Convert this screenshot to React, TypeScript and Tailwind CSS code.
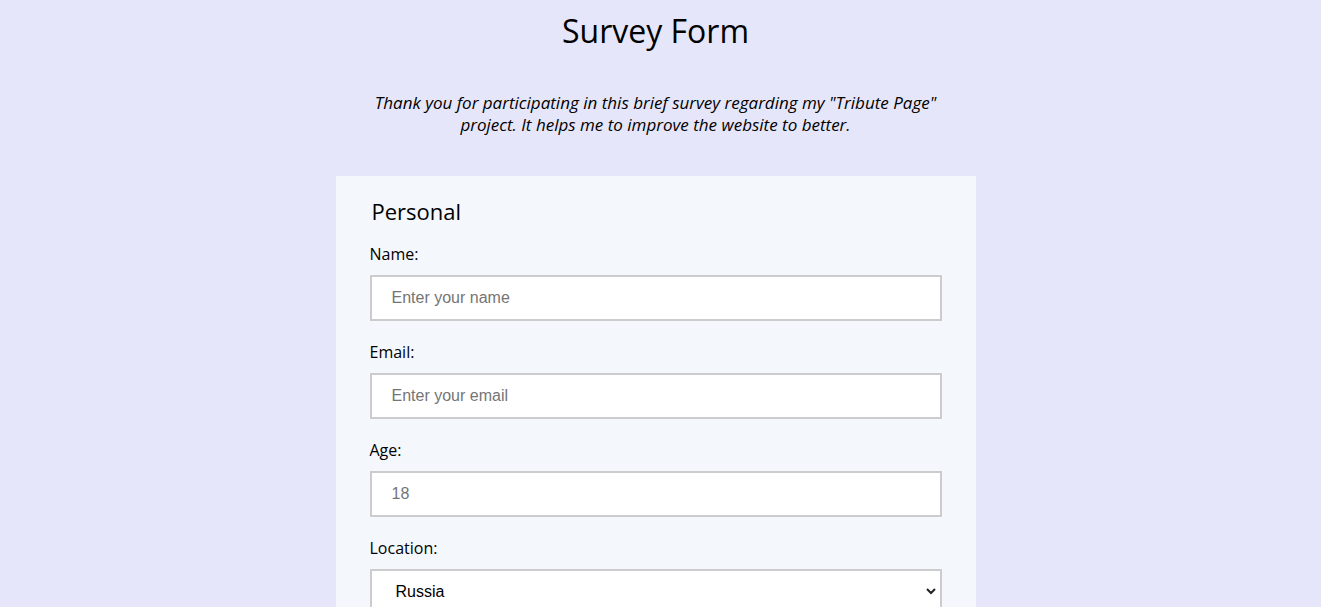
import React from "react";

const fields = [
  { id: "name", label: "Name:", type: "text", placeholder: "Enter your name" },
  { id: "email", label: "Email:", type: "email", placeholder: "Enter your email" },
  { id: "age", label: "Age:", type: "number", placeholder: "18" },
];

export default function App() {
  return (
    <div className="min-h-screen bg-[#e6e6fa] pr-[10px] text-black font-['Open_Sans',sans-serif]">
      <h1 className="pt-[7px] text-center text-[32px] leading-[48px] font-normal">Survey Form</h1>
      <p className="mx-auto mt-[37px] max-w-[600px] text-center text-[17px] italic leading-[22px]">
        Thank you for participating in this brief survey regarding my "Tribute Page" project. It helps
        me to improve the website to better.
      </p>

      <form className="mx-auto mt-[40px] w-[640px] bg-[#f4f7fc] px-[34px] pt-[20px] pb-10">
        <h2 className="pl-[2px] text-[22px] leading-[30px] font-normal">Personal</h2>
        <div className="mt-[17px] flex flex-col">
          {fields.map((field) => (
            <div key={field.id} className="mb-[20px] flex flex-col">
              <label htmlFor={field.id} className="mb-[10px] text-base leading-[22px]">
                {field.label}
              </label>
              <input
                id={field.id}
                type={field.type}
                placeholder={field.placeholder}
                className="h-[46px] w-full border-2 border-[#cccccc] bg-white px-5 font-['Liberation_Sans',Arial,sans-serif] text-base placeholder:text-[#757575] outline-none"
              />
            </div>
          ))}
          <div className="flex flex-col">
            <label htmlFor="location" className="mb-[10px] text-base leading-[22px]">
              Location:
            </label>
            <div className="relative">
              <select
                id="location"
                defaultValue="russia"
                className="h-[46px] w-full appearance-none border-2 border-[#cccccc] bg-white pl-6 font-['Liberation_Sans',Arial,sans-serif] text-base outline-none"
              >
                <option value="russia">Russia</option>
                <option value="usa">USA</option>
                <option value="other">Other</option>
              </select>
              <svg
                className="pointer-events-none absolute right-[6px] top-[18px]"
                width="10"
                height="8"
                viewBox="0 0 10 8"
              >
                <path d="M1 2 L5 6 L9 2" fill="none" stroke="#222" strokeWidth="2" />
              </svg>
            </div>
          </div>
        </div>
      </form>
    </div>
  );
}
